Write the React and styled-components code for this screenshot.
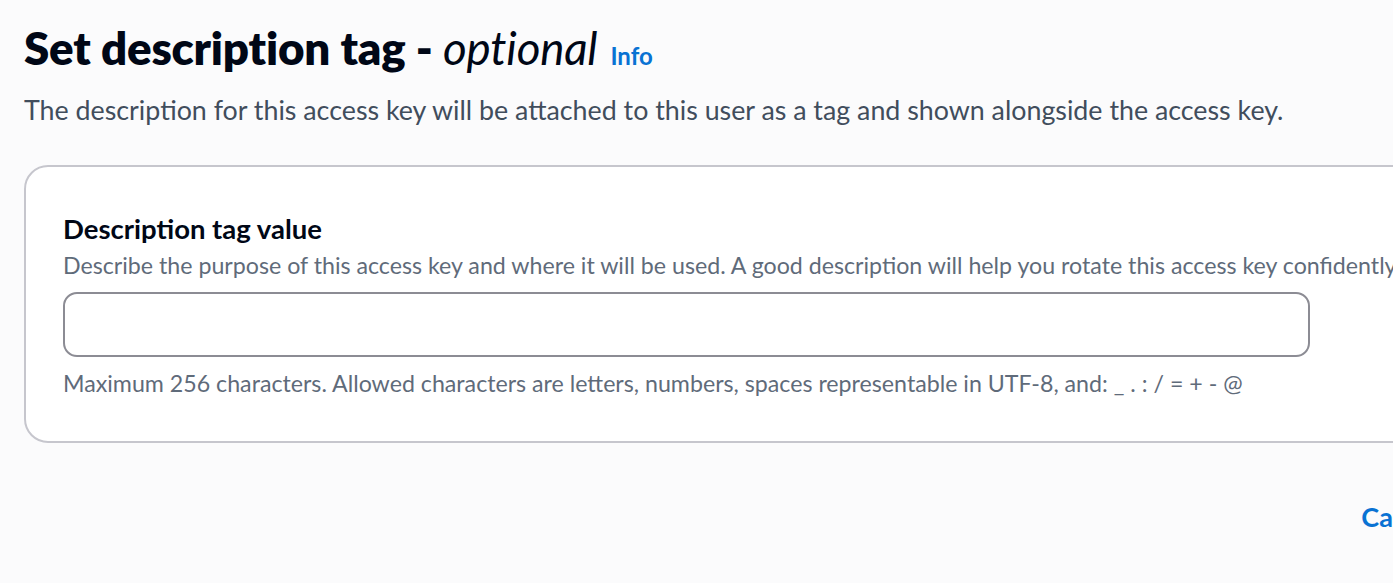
import React from "react";
import styled, { createGlobalStyle } from "styled-components";

const Global = createGlobalStyle`
  html, body { margin: 0; padding: 0; background: #fbfbfc; overflow: hidden; }
  body { font-family: Lato, "Open Sans", sans-serif; color: #000716; }
`;

const Page = styled.div`
  width: 1393px;
  height: 583px;
  padding: 22px 0 0 24px;
  box-sizing: border-box;
  display: flex;
  flex-direction: column;
`;

const HeaderRow = styled.div`
  display: flex;
  align-items: baseline;
  gap: 13px;
`;

const Title = styled.h1`
  margin: 0;
  font-size: 45.7px;
  line-height: 52px;
  font-weight: 800;
  color: #000716;
  letter-spacing: -0.2px;
`;

const Optional = styled.i`
  font-weight: 400;
`;

const InfoLink = styled.a`
  font-size: 24px;
  font-weight: 700;
  color: #0972d3;
  text-decoration: none;
`;

const Lead = styled.p`
  margin: 19px 0 0;
  font-size: 26.8px;
  line-height: 34px;
  color: #414d5c;
  white-space: nowrap;
`;

const Card = styled.section`
  margin-top: 38px;
  width: 1420px;
  box-sizing: border-box;
  background: #ffffff;
  border: 2px solid #c6c6cd;
  border-radius: 24px;
  padding: 45px 0 43px 37px;
`;

const Label = styled.label`
  display: block;
  font-size: 27.5px;
  line-height: 34px;
  font-weight: 700;
  color: #000716;
`;

const Hint = styled.div`
  margin-top: ${(p) => p.$gap}px;
  font-size: 23.2px;
  line-height: 30px;
  color: #5f6b7a;
  white-space: nowrap;
`;

const Input = styled.input`
  display: block;
  margin-top: 12px;
  width: 1247px;
  height: 65px;
  box-sizing: border-box;
  border: 2px solid #8c8c94;
  border-radius: 14px;
  background: #fff;
`;

const Footer = styled.div`
  display: flex;
  justify-content: flex-end;
  margin-top: 58px;
`;

const CancelLink = styled.a`
  font-size: 27px;
  line-height: 32px;
  font-weight: 700;
  color: #0972d3;
  margin-right: -49px;
`;

export default function App() {
  return (
    <>
      <Global />
      <Page>
        <HeaderRow>
          <Title>
            Set description tag - <Optional>optional</Optional>
          </Title>
          <InfoLink>Info</InfoLink>
        </HeaderRow>
        <Lead>
          The description for this access key will be attached to this user as a tag and shown alongside the access key.
        </Lead>
        <Card>
          <Label>Description tag value</Label>
          <Hint $gap={4}>
            Describe the purpose of this access key and where it will be used. A good description will help you rotate this access key confidently later.
          </Hint>
          <Input />
          <Hint $gap={11}>
            Maximum 256 characters. Allowed characters are letters, numbers, spaces representable in UTF-8, and: _ . : / = + - @
          </Hint>
        </Card>
        <Footer>
          <CancelLink>Cancel</CancelLink>
        </Footer>
      </Page>
    </>
  );
}
